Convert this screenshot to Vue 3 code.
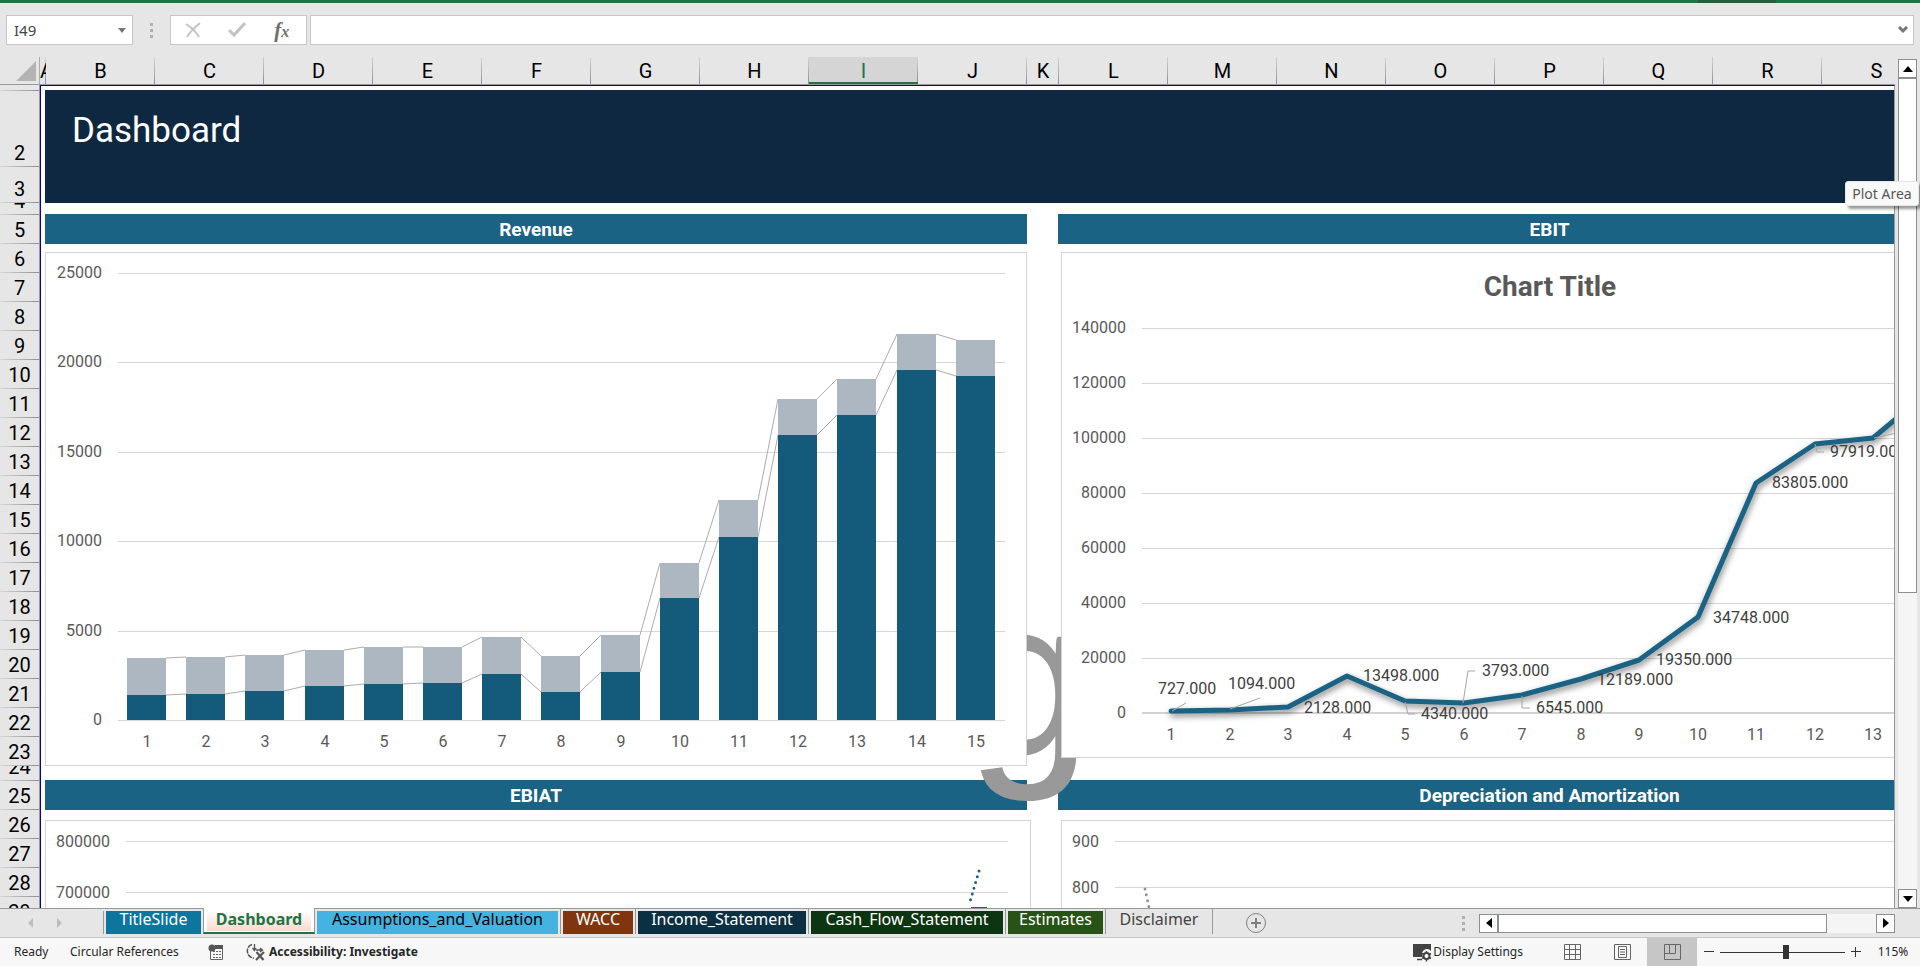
<script setup>
const columns = [
  { name: 'A', width: 6 },
  ...'BCDEFGHIJ'.split('').map((name) => ({ name, width: 109 })),
  { name: 'K', width: 32 },
  ...'LMNOPQRS'.split('').map((name) => ({ name, width: 109 })),
]

const rowHeights = { 1: 6, 2: 76, 3: 36, 4: 12, 24: 15 }
const rows = Array.from({ length: 29 }, (_, i) => ({ n: i + 1, height: rowHeights[i + 1] || 29 }))

const tabs = [
  { name: 'TitleSlide', tone: 'blue' },
  { name: 'Dashboard', tone: 'active' },
  { name: 'Assumptions_and_Valuation', tone: 'sky' },
  { name: 'WACC', tone: 'rust' },
  { name: 'Income_Statement', tone: 'navy' },
  { name: 'Cash_Flow_Statement', tone: 'forest' },
  { name: 'Estimates', tone: 'green' },
  { name: 'Disclaimer', tone: 'plain' },
]

// Revenue: stacked columns
const base = [1410, 1470, 1640, 1920, 2030, 2080, 2600, 1580, 2700, 6800, 10250, 15950, 17070, 19580, 19250]
const total = [3490, 3500, 3660, 3940, 4060, 4110, 4620, 3600, 4730, 8800, 12280, 17970, 19080, 21600, 21280]
const revY = (v) => Math.round(468 - (v * 447) / 25000)
const revBars = base.map((b, i) => {
  const mid = 102 + i * 59.2
  const x = Math.round(mid - 20)
  return { n: i + 1, mid: Math.round(mid), x, right: x + 39, yb: revY(b), yt: revY(total[i]) }
})
const revLinks = revBars.slice(1).flatMap((b, i) => {
  const a = revBars[i]
  return [
    { x1: a.right, y1: a.yt, x2: b.x, y2: b.yt },
    { x1: a.right, y1: a.yb, x2: b.x, y2: b.yb },
  ]
})
const revTicks = [25000, 20000, 15000, 10000, 5000, 0]

// EBIT: line
const ebit = [727, 1094, 2128, 13498, 4340, 3793, 6545, 12189, 19350, 34748, 83805, 97919, 100000, 118000]
const ebitX = (i) => Math.round(110 + i * 58.5)
const ebitY = (v) => Math.round(461 - (v * 385) / 140000)
const ebitPoints = ebit.map((v, i) => `${ebitX(i)},${ebitY(v)}`).join(' ')
const ebitTicks = [140000, 120000, 100000, 80000, 60000, 40000, 20000, 0]
const ebitLabels = [
  ['727.000', 97, 437],
  ['1094.000', 167, 432],
  ['2128.000', 243, 456],
  ['13498.000', 302, 424],
  ['4340.000', 360, 462],
  ['3793.000', 421, 419],
  ['6545.000', 475, 456],
  ['12189.000', 536, 428],
  ['19350.000', 595, 408],
  ['34748.000', 652, 366],
  ['83805.000', 711, 231],
  ['97919.000', 769, 200],
]
const leaders = [
  '111,459 125,451',
  '169,457 199,446',
  '344,450 347,462 354,462',
  '402,451 407,419 414,419',
  '461,444 461,456 469,456',
  '754,192 756,200 763,200',
  '813,186 836,181',
]
</script>

<template>
  <div class="app">
    <div class="titlebar"></div>

    <div class="formula-bar">
      <div class="name-box">
        <input class="name-input" type="text" value="I49" aria-label="Name Box" />
        <button class="bare name-drop" aria-label="Open name list">
          <svg width="8" height="5" viewBox="0 0 8 5"><path d="M0 0h8L4 5z" fill="#767676" /></svg>
        </button>
      </div>
      <div class="grip"><i></i><i></i><i></i></div>
      <div class="fx-box">
        <button class="bare" aria-label="Cancel">
          <svg width="16" height="16" viewBox="0 0 16 16" fill="none" stroke="#c3c3c3" stroke-width="2"><path d="M1 2C6 5 11 10 14 15M15 1C10 5 5 10 2 15" /></svg>
        </button>
        <button class="bare" aria-label="Enter">
          <svg width="18" height="16" viewBox="0 0 18 16" fill="none" stroke="#c3c3c3" stroke-width="3"><path d="M1 8l5 5L17 1" /></svg>
        </button>
        <button class="bare fx" aria-label="Insert Function"><span>f</span><small>x</small></button>
      </div>
      <div class="formula">
        <input class="formula-input" type="text" aria-label="Formula" />
        <button class="bare" aria-label="Expand formula bar">
          <svg width="10" height="8" viewBox="0 0 10 8" fill="none" stroke="#767676" stroke-width="3"><path d="M1 1l4 4 4-4" /></svg>
        </button>
      </div>
    </div>

    <main class="work">
      <div class="corner">
        <button class="bare" aria-label="Select all">
          <svg width="20" height="20" viewBox="0 0 20 20"><path d="M20 0v20H0z" fill="#b4b4b4" /></svg>
        </button>
      </div>
      <div class="col-heads">
        <div v-for="c in columns" :key="c.name" class="col" :class="{ selected: c.name === 'I', narrow: c.width < 10 }" :style="{ width: c.width + 'px' }">
          <span>{{ c.name }}</span>
        </div>
      </div>
      <div class="row-heads">
        <div v-for="r in rows" :key="r.n" class="row" :style="{ height: r.height + 'px' }">
          <span v-if="r.n > 1">{{ r.n }}</span>
        </div>
      </div>

      <div class="sheet">
        <div class="cells">
          <h1 class="banner">Dashboard</h1>
          <h2 class="heading left r1">Revenue</h2>
          <h2 class="heading right r1">EBIT</h2>
          <h2 class="heading left r2">EBIAT</h2>
          <h2 class="heading right r2">Depreciation and Amortization</h2>
          <span class="watermark">g</span>

          <svg class="chart c-rev" width="982" height="514">
            <g class="grid">
              <line v-for="t in revTicks" :key="t" x1="73" x2="960" :y1="revY(t) + 0.5" :y2="revY(t) + 0.5" />
            </g>
            <g class="axis end">
              <text v-for="t in revTicks" :key="t" x="57" :y="revY(t) + 5">{{ t }}</text>
            </g>
            <g class="links">
              <line v-for="(l, i) in revLinks" :key="i" v-bind="l" />
            </g>
            <g shape-rendering="crispEdges">
              <template v-for="b in revBars" :key="b.n">
                <rect :x="b.x" :y="b.yt" width="39" :height="b.yb - b.yt" fill="#adb7c2" />
                <rect :x="b.x" :y="b.yb" width="39" :height="468 - b.yb" fill="#145a7a" />
              </template>
            </g>
            <g class="axis mid">
              <text v-for="b in revBars" :key="b.n" :x="b.mid" y="495">{{ b.n }}</text>
            </g>
          </svg>

          <svg class="chart c-ebit" width="980" height="506">
            <text class="chart-title" x="489" y="44">Chart Title</text>
            <g class="grid">
              <line v-for="t in ebitTicks" :key="t" x1="81" x2="960" :y1="ebitY(t) + 0.5" :y2="ebitY(t) + 0.5" />
            </g>
            <line x1="81" x2="960" y1="461" y2="461" stroke="#d2d2d2" stroke-width="2" />
            <g class="axis end">
              <text v-for="t in ebitTicks" :key="t" x="65" :y="ebitY(t) + 5">{{ t }}</text>
            </g>
            <g class="axis mid">
              <text v-for="(v, i) in ebit" :key="i" :x="ebitX(i)" y="488">{{ i + 1 }}</text>
            </g>
            <polyline class="ebit-line" :points="ebitPoints" />
            <g class="leaders">
              <polyline v-for="p in leaders" :key="p" :points="p" />
            </g>
            <g class="data">
              <text v-for="l in ebitLabels" :key="l[0]" :x="l[1]" :y="l[2] + 5">{{ l[0] }}</text>
            </g>
          </svg>

          <svg class="chart c-ebiat" width="986" height="400">
            <g class="grid">
              <line x1="81" x2="963" y1="21.5" y2="21.5" />
              <line x1="81" x2="963" y1="72.5" y2="72.5" />
            </g>
            <g class="axis end">
              <text x="65" y="27">800000</text>
              <text x="65" y="78">700000</text>
            </g>
            <path class="dots" d="M934 51L924 85" stroke="#1a6384" />
            <rect x="926" y="87" width="16" height="40" fill="#1a6384" />
          </svg>

          <svg class="chart c-da" width="980" height="400">
            <g class="grid">
              <line x1="54" x2="960" y1="21.5" y2="21.5" />
              <line x1="54" x2="960" y1="67.5" y2="67.5" />
            </g>
            <g class="axis end">
              <text x="38" y="27">900</text>
              <text x="38" y="73">800</text>
            </g>
            <path class="dots" d="M84 69L89 92" stroke="#8296a6" />
          </svg>
        </div>
      </div>

      <div class="vscroll">
        <button class="bare sbtn" aria-label="Scroll up"><svg width="10" height="6" viewBox="0 0 10 6"><path d="M5 0l5 6H0z" /></svg></button>
        <div class="vtrack"><div class="vthumb"></div></div>
        <button class="bare sbtn" aria-label="Scroll down"><svg width="10" height="6" viewBox="0 0 10 6"><path d="M5 6l5-6H0z" /></svg></button>
      </div>
    </main>

    <div class="tabbar">
      <div class="tab-nav">
        <button class="bare" aria-label="Previous sheets"><svg width="5" height="10" viewBox="0 0 5 10"><path d="M5 0v10L0 5z" fill="#bdbdbd" /></svg></button>
        <button class="bare" aria-label="Next sheets"><svg width="5" height="10" viewBox="0 0 5 10"><path d="M0 0v10l5-5z" fill="#bdbdbd" /></svg></button>
      </div>
      <div class="tabs">
        <button v-for="t in tabs" :key="t.name" class="tab" :class="t.tone"><span>{{ t.name }}</span></button>
      </div>
      <button class="bare add" aria-label="New sheet">
        <svg width="22" height="22" viewBox="0 0 22 22" fill="none" stroke="#808080"><circle cx="11" cy="11" r="9.5" /><path d="M11 6v10M6 11h10" stroke-width="2" /></svg>
      </button>
      <div class="grip tab-grip"><i></i><i></i><i></i></div>
      <div class="hscroll">
        <button class="bare sbtn" aria-label="Scroll left"><svg width="6" height="10" viewBox="0 0 6 10"><path d="M6 0v10L0 5z" /></svg></button>
        <div class="htrack"><div class="hthumb"></div></div>
        <button class="bare sbtn" aria-label="Scroll right"><svg width="6" height="10" viewBox="0 0 6 10"><path d="M0 0v10l6-5z" /></svg></button>
      </div>
    </div>

    <footer class="status">
      <span class="ready">Ready</span>
      <span class="circ">Circular References</span>
      <button class="bare macro" aria-label="Record macro">
        <svg width="16" height="17" viewBox="0 0 16 17"><path d="M2.500 7v8.500h12V4" fill="none" stroke="#666" /><path d="M7 1h8v4H7z" fill="#555" /><circle cx="4" cy="4" r="3.500" fill="#555" /><path d="M5 7.500h2m1 0h2m1 0h2M5 10.500h2m1 0h2m1 0h2M5 13.500h2m1 0h2m1 0h2" stroke="#666" /></svg>
      </button>
      <button class="bare access">
        <svg width="20" height="18" viewBox="0 0 20 18" fill="none" stroke="#555"><path d="M6 1.500C1 3 0 9 3 12.500c1 1.500 3 2.500 5 2.500" stroke-width="1.500" stroke-dasharray="5 1" /><path d="M8.500 1v6M6.500 5l2 2.500L10 5M10 7h6M14 5l2.500 2L14 9" stroke-width="1.300" /><path d="M10.500 9l7 8M18 9l-8 8" stroke-width="2.200" /></svg>
        <span>Accessibility: Investigate</span>
      </button>
      <button class="bare display">
        <svg width="20" height="19" viewBox="0 0 20 19"><path d="M1 1h18v7a5 5 0 0 0-8 6H1z" fill="#444" /><path d="M5 16.500h5" stroke="#444" stroke-width="1.500" /><circle cx="14.500" cy="13" r="3" fill="none" stroke="#444" stroke-width="2" /><path d="M14.500 8v2m0 6v2.500M10 10.500l2 1m5 3l2 1M10 15.500l2-1m5-3l2-1" stroke="#444" stroke-width="1.500" /></svg>
        <span>Display Settings</span>
      </button>
      <div class="views">
        <button class="bare view" aria-label="Normal"><svg width="17" height="16" viewBox="0 0 17 16" fill="none" stroke="#666"><path d="M.5.5h16v15H.5zM.5 5.500h16M.5 10.500h16M5.500.5v15M11.500.5v15" /></svg></button>
        <button class="bare view" aria-label="Page Layout"><svg width="17" height="16" viewBox="0 0 17 16" fill="none" stroke="#666"><path d="M.5.5h16v15H.5zM4.500 2.500h8v11h-8zM6 5.500h5M6 8h5M6 10.500h5" /></svg></button>
        <button class="bare view on" aria-label="Page Break Preview"><svg width="17" height="16" viewBox="0 0 17 16" fill="none" stroke="#666"><path d="M.5.5h16v15H.5zM.5 9.500h11v-9M5.500.5v9" /></svg></button>
      </div>
      <button class="bare zbtn" aria-label="Zoom out"><svg width="10" height="10" viewBox="0 0 10 10"><path d="M0 4.500h10" stroke="#333" /></svg></button>
      <input class="zoom" type="range" min="0" max="100" value="53" aria-label="Zoom" />
      <button class="bare zbtn" aria-label="Zoom in"><svg width="10" height="10" viewBox="0 0 10 10"><path d="M0 4.500h10M4.500 0v10" stroke="#333" /></svg></button>
      <button class="bare pct">115%</button>
    </footer>

    <div class="tooltip" role="tooltip">Plot Area</div>
  </div>
</template>

<style>
body {
  margin: 0;
  overflow: hidden;
}
</style>

<style scoped>
.app {
  position: relative;
  display: flex;
  flex-direction: column;
  height: 100vh;
  overflow: hidden;
  background: #e6e6e6;
  font-family: Roboto, "Liberation Sans", sans-serif;
  color: #000;
}
.app * {
  box-sizing: border-box;
}
svg {
  display: block;
  flex: none;
}
.bare {
  display: flex;
  align-items: center;
  justify-content: center;
  padding: 0;
  border: 0;
  background: none;
  color: inherit;
  font: inherit;
}
.titlebar {
  flex: none;
  height: 3px;
  background: linear-gradient(#255f3c, #255f3c) right 144px top / 78px 3px no-repeat #217346;
}

.formula-bar {
  display: flex;
  flex: none;
  height: 54px;
  padding: 12px 6px;
}
.name-box,
.fx-box,
.formula {
  display: flex;
  align-items: center;
  height: 30px;
  border: 1px solid #c6c6c6;
  background: #fff;
}
.name-box {
  width: 127px;
}
.name-input,
.formula-input {
  flex: 1;
  min-width: 0;
  height: 100%;
  padding: 0 7px;
  border: 0;
  outline: 0;
  background: none;
  color: #444;
  font: 15px "Noto Sans", sans-serif;
}
.name-drop {
  width: 20px;
  height: 100%;
}
.grip {
  display: flex;
  flex-direction: column;
  justify-content: center;
  align-items: center;
  gap: 3px;
  width: 37px;
}
.grip i {
  width: 3px;
  height: 3px;
  background: #b0b0b0;
}
.fx-box {
  width: 137px;
  margin-right: 3px;
  padding-right: 2px;
}
.fx-box .bare {
  flex: 1;
}
.fx {
  color: #6e6e6e;
  font: italic bold 21px "Liberation Serif", serif;
}
.fx small {
  font-size: 16px;
  padding-top: 4px;
}
.formula {
  flex: 1;
}
.formula .bare {
  width: 20px;
}

.work {
  display: grid;
  flex: 1;
  min-height: 0;
  grid-template-columns: 40px minmax(0, 1fr) 25px;
  grid-template-rows: 28px minmax(0, 1fr);
}
.corner {
  display: flex;
  align-items: center;
  justify-content: flex-end;
  padding-right: 3px;
  border-right: 1px solid #ababab;
  border-bottom: 1px solid #999;
}
.col-heads {
  display: flex;
  overflow: hidden;
  border-bottom: 1px solid #999;
  font-size: 20px;
}
.col {
  display: flex;
  flex: none;
  align-items: center;
  justify-content: center;
  overflow: hidden;
  padding-top: 1px;
  background: linear-gradient(#d4d4d4, #8f8f8f) right / 1px 100% no-repeat;
}
.col.narrow {
  justify-content: flex-start;
}
.col.selected {
  border-bottom: 2px solid #217346;
  padding-top: 3px;
  background-color: #d5d5d5;
  color: #217346;
}
.row-heads {
  overflow: hidden;
  border-right: 1px solid #999;
  font-size: 20px;
}
.row {
  display: flex;
  align-items: flex-end;
  justify-content: center;
  overflow: hidden;
  background: linear-gradient(90deg, #d8d8d8, #8f8f8f) bottom / 100% 1px no-repeat;
}
.row span {
  line-height: 27px;
}

.sheet {
  overflow: hidden;
  border-top: 1px solid #0000c0;
  border-left: 1px solid #0000c0;
  border-right: 1px solid #999;
  background: #fff;
}
.cells {
  position: relative;
  display: grid;
  grid-template-columns: 4px 982px 31px 983px;
  grid-template-rows: 4px 113px 11px 30px 536px 30px 400px;
}
.banner {
  grid-area: 2 / 2 / 3 / 5;
  margin: 0;
  padding: 21px 27px;
  background: #0f2841;
  color: #fff;
  font-size: 35px;
  font-weight: 400;
  line-height: 40px;
}
.heading {
  margin: 0;
  background: #1a6384;
  color: #fff;
  font-size: 19px;
  font-weight: 700;
  line-height: 31px;
  height: 30px;
  text-align: center;
}
.left {
  grid-column: 2;
}
.right {
  grid-column: 4;
}
.r1 {
  grid-row: 4;
}
.r2 {
  grid-row: 6;
}
.watermark {
  position: absolute;
  left: 927px;
  top: 467px;
  color: #999;
  font: 220px/250px "Liberation Sans", sans-serif;
  -webkit-text-stroke: 2px #999;
}
.chart {
  position: relative;
  outline: 1px solid #d3d3d3;
  outline-offset: -1px;
  background: #fff;
}
.c-rev {
  grid-area: 5 / 2;
  margin-top: 8px;
}
.c-ebit {
  grid-area: 5 / 4;
  margin: 8px 0 0 3px;
}
.c-ebiat {
  grid-area: 7 / 2;
  margin-top: 10px;
}
.c-da {
  grid-area: 7 / 4;
  margin: 10px 0 0 3px;
}
.grid line {
  stroke: #d6d6d6;
}
.axis text {
  fill: #595959;
  font-size: 16px;
}
.end text {
  text-anchor: end;
}
.mid text {
  text-anchor: middle;
}
.links line {
  stroke: #ababab;
}
.chart-title {
  fill: #595959;
  font-size: 28px;
  font-weight: 700;
  text-anchor: middle;
}
.ebit-line {
  fill: none;
  stroke: #1a6384;
  stroke-width: 5px;
  stroke-linecap: round;
  stroke-linejoin: round;
  filter: drop-shadow(1px 3px 3px rgba(0, 0, 0, 0.5));
}
.leaders polyline {
  fill: none;
  stroke: #a6a6a6;
}
.data text {
  fill: #404040;
  font-size: 16px;
}
.dots {
  stroke-width: 3px;
  stroke-linecap: round;
  stroke-dasharray: 0 6;
}

.sbtn {
  flex: none;
  width: 19px;
  height: 19px;
  border: 1px solid #8a8f8f;
  background: #fff;
}
.vscroll {
  display: flex;
  flex-direction: column;
  grid-area: 1 / 3 / 3 / 4;
  width: 19px;
  margin: 2px 0 0 3px;
}
.vtrack {
  flex: 1;
  min-height: 0;
  background: #f5f5f5;
}
.vthumb {
  height: 63.5%;
  border: 1px solid #8a8f8f;
  background: #fff;
}

.tabbar {
  display: flex;
  flex: none;
  align-items: center;
  height: 30px;
  border-top: 1px solid #999;
  border-bottom: 1px solid #c6c6c6;
}
.tab-nav {
  display: flex;
  gap: 24px;
  width: 103px;
  padding-left: 28px;
}
.tabs {
  display: flex;
  align-self: flex-start;
  height: 25px;
  padding-left: 1px;
  background: linear-gradient(#999, #999) left bottom / 1px 23px no-repeat;
}
.tab {
  display: flex;
  flex: none;
  padding: 2px 2px 0;
  border: 0;
  border-right: 1px solid #999;
  background: none;
  font: 16px "Noto Sans", sans-serif;
}
.tab span {
  width: 100%;
  height: 23px;
  color: #fff;
  line-height: 17px;
  text-align: center;
}
.tab:nth-child(1) { width: 99px; border-right: 0; }
.tab:nth-child(2) { width: 112px; }
.tab:nth-child(3) { width: 246px; }
.tab:nth-child(4) { width: 75px; }
.tab:nth-child(5) { width: 173px; }
.tab:nth-child(6) { width: 197px; }
.tab:nth-child(7) { width: 100px; }
.tab:nth-child(8) { width: 107px; }
.blue span { background: #0c769e; }
.sky span { background: #44b3e1; color: #000; }
.rust span { background: #80350e; }
.navy span { background: #0b3041; }
.forest span { background: #0d3512; }
.green span { background: #275317; }
.plain span { color: #444; }
.tab.active {
  margin-top: -1px;
  padding: 3px 3px 0;
  border-bottom: 2px solid #217346;
  border-left: 1px solid #999;
  background: #fff;
}
.tab.active span {
  height: 20px;
  background: linear-gradient(#fff, #f9d9cc);
  color: #217346;
  font-weight: 700;
}
.add {
  margin-left: 32px;
}
.tab-grip {
  width: 10px;
  margin-left: auto;
}
.hscroll {
  display: flex;
  width: 416px;
  margin: 0 25px 0 11px;
}
.htrack {
  flex: 1;
  background: #f5f5f5;
}
.hthumb {
  width: 87%;
  height: 19px;
  border: 1px solid #8a8f8f;
  background: #fff;
}

.status {
  display: flex;
  flex: none;
  align-items: center;
  height: 28px;
  padding: 0 11px 0 14px;
  background: #f7f7f7;
  color: #262626;
  font: 12px/26px "Noto Sans", sans-serif;
}
.ready {
  width: 56px;
}
.circ {
  width: 138px;
}
.access {
  gap: 3px;
  margin-left: 22px;
  font-weight: 700;
}
.display {
  gap: 1px;
  margin-left: auto;
}
.views {
  display: flex;
  margin: 0 7px 0 24px;
}
.view {
  width: 50px;
  height: 28px;
}
.view.on {
  background: #c6c6c6;
}
.zbtn {
  width: 10px;
  height: 26px;
}
.zoom {
  width: 125px;
  height: 20px;
  margin: 0 6px;
  appearance: none;
  background: linear-gradient(#333, #333) center / 100% 1px no-repeat;
}
.zoom::-webkit-slider-thumb {
  appearance: none;
  width: 6px;
  height: 14px;
  border: 0;
  border-radius: 0;
  background: #333;
}
.pct {
  width: 32px;
  margin-left: 16px;
}

.tooltip {
  position: absolute;
  top: 181px;
  right: 1px;
  width: 74px;
  border: 1px solid #e6e6e6;
  border-radius: 3px;
  background: #f9f9f9;
  box-shadow: 3px 3px 3px rgba(0, 0, 0, 0.4);
  color: #575757;
  font: 14px/23px "Noto Sans", sans-serif;
  text-align: center;
}
</style>
